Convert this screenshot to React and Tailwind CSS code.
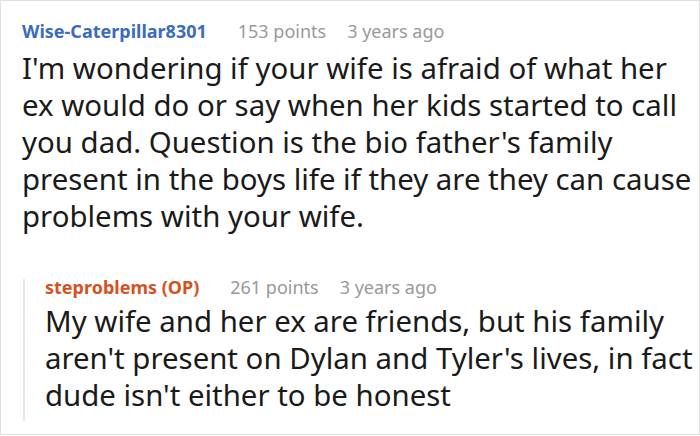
export default function App() {
  return (
    <div className="w-[700px] h-[436px] bg-white overflow-hidden" style={{ fontFamily: '"Noto Sans", sans-serif' }}>
      <div className="w-[700px] h-[435px] border border-[#e0e0e0] pl-[21px] pt-[14px]">
        <div className="flex items-baseline text-[18px] leading-[32px]">
          <span className="font-bold text-[#3a6bbd]">Wise-Caterpillar8301</span>
          <span className="ml-[31px] text-[#999999]">153 points</span>
          <span className="ml-[21px] text-[#999999]">3 years ago</span>
        </div>
        <p className="mt-[3px] text-[29.4px] leading-[37px] text-[#1a1a1a] pr-[6px]">
          I'm wondering if your wife is afraid of what her ex would do or say when her kids started to call you dad. Question is the bio father's family present in the boys life if they are they can cause problems with your wife.
        </p>
        <div className="ml-[1px] mt-[44px] border-l-2 border-[#e6e6e6] pl-[20px] pb-[7px]">
          <div className="flex items-baseline text-[18px] leading-[16px] mb-[8px]">
            <span className="font-bold text-[#d4521f]">steproblems (OP)</span>
            <span className="ml-[31px] text-[#999999]">261 points</span>
            <span className="ml-[21px] text-[#999999]">3 years ago</span>
          </div>
          <p className="text-[29.4px] leading-[37px] text-[#1a1a1a] pr-[2px]">
            My wife and her ex are friends, but his family aren't present on Dylan and Tyler's lives, in fact dude isn't either to be honest
          </p>
        </div>
      </div>
    </div>
  );
}
